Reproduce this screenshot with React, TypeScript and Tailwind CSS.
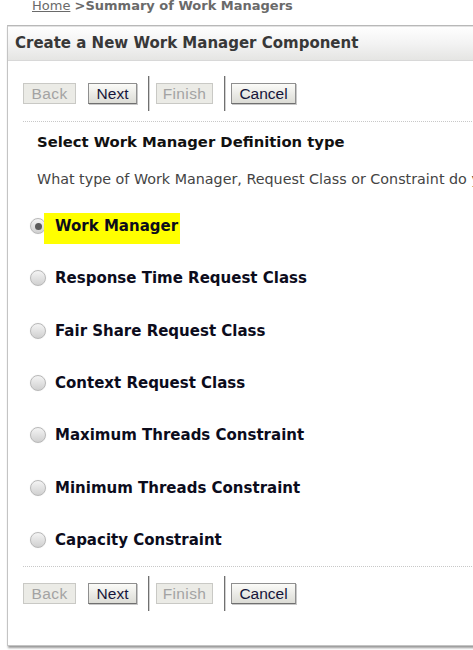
import React from "react";

function Btn({ label, disabled, w }: { label: string; disabled?: boolean; w: string }) {
  return disabled ? (
    <div className={`${w} h-[21px] flex items-center justify-center border border-[#c9c9c5] bg-[#ebebe6] text-[#a3a3a3] text-[15.5px] leading-none font-['Liberation_Sans',Arial,sans-serif] tracking-[0.4px]`}>
      {label}
    </div>
  ) : (
    <div className={`${w} h-[21px] flex items-center justify-center border border-[#8f8f8f] border-b-[#6f6f6f] bg-gradient-to-b from-[#fbfbf8] to-[#dcdcd6] text-[#15153a] text-[15.5px] leading-none font-['Liberation_Sans',Arial,sans-serif] shadow-[1px_1px_0_#c8c8c8]`}>
      {label}
    </div>
  );
}

function Sep({ l, r }: { l: string; r: string }) {
  return <div className={`w-[2px] h-[35px] bg-[#707070] border-r border-[#d0d0d0] ${l} ${r}`} />;
}

function Toolbar() {
  return (
    <div className="flex items-center h-[35px] pl-[15px]">
      <Btn label="Back" disabled w="w-[53px]" />
      <div className="w-[12px]" />
      <Btn label="Next" w="w-[49px]" />
      <Sep l="ml-[11px]" r="mr-[6px]" />
      <Btn label="Finish" disabled w="w-[57px]" />
      <Sep l="ml-[11px]" r="mr-[5px]" />
      <Btn label="Cancel" w="w-[65px]" />
    </div>
  );
}

function Radio({ checked }: { checked?: boolean }) {
  return (
    <div className="w-[16px] h-[16px] rounded-full border border-[#b8b8b8] bg-gradient-to-b from-[#f4f4f4] to-[#d0d0d0] flex items-center justify-center shadow-[0_0_1px_#ddd]">
      {checked && <div className="w-[7px] h-[7px] rounded-full bg-[#5a5a5a]" />}
    </div>
  );
}

const options = [
  "Work Manager",
  "Response Time Request Class",
  "Fair Share Request Class",
  "Context Request Class",
  "Maximum Threads Constraint",
  "Minimum Threads Constraint",
  "Capacity Constraint",
];

export default function App() {
  return (
    <div className="w-[473px] h-[650px] overflow-hidden bg-white font-['DejaVu_Sans',Verdana,sans-serif]">
      <div className="h-[26px] pl-[32px] mt-[-1px] text-[13px] leading-[14px] text-[#6a6a6a]">
        <span className="underline">Home</span>{" "}
        <span className="font-bold">&gt;Summary of Work Managers</span>
      </div>
      <div className="ml-[7px] w-[520px] h-[621px] border border-[#c4c4c4] border-t-[#b8b8b8] shadow-[1px_2px_2px_#9a9a9a] bg-white">
        <div className="h-[35px] border-t border-t-[#e2e2e2] border-b border-b-[#d8d8d8] bg-gradient-to-b from-[#fefefe] via-[#f3f3f3] to-[#e5e5e3] flex items-center pl-[7px]">
          <span className="font-bold text-[15px] text-[#383838]">Create a New Work Manager Component</span>
        </div>
        <div className="h-[15px]" />
        <Toolbar />
        <div className="h-[10px]" />
        <div className="ml-[15px] border-t border-dotted border-[#c8c8c8]" />
        <div className="pl-[29px]">
          <div className="h-[40px] flex items-center font-bold text-[14.8px] text-[#111]">
            Select Work Manager Definition type
          </div>
          <div className="h-[36px] flex items-center text-[14.3px] text-[#444] whitespace-nowrap">
            What type of Work Manager, Request Class or Constraint do you want to create?
          </div>
        </div>
        <div className="pl-[22px] mt-[2px]">
          {options.map((o, i) => (
            <div key={o} className="h-[52.3px] flex items-center">
              <Radio checked={i === 0} />
              <div className="ml-[9px] relative">
                {i === 0 && <div className="absolute left-[-11px] right-[-2px] top-[-1px] bottom-[-6px] bg-[#ffff00]" />}
                <span className="relative font-bold text-[15px] text-[#0c0c1c]">{o}</span>
              </div>
            </div>
          ))}
        </div>
        <div className="ml-[15px] border-t border-dotted border-[#c8c8c8]" />
        <div className="h-[9px]" />
        <Toolbar />
      </div>
    </div>
  );
}
